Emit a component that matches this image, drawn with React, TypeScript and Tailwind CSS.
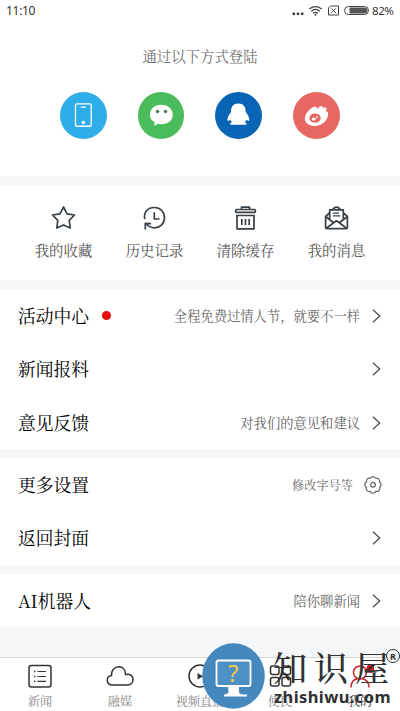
import React from 'react';

const cjk = "font-['Noto_Serif_CJK_SC','Noto_Sans_CJK_SC',serif]";

const Chevron = () => (
  <svg className="w-[22px] h-[18px] shrink-0" viewBox="0 0 22 18" fill="none" stroke="#555" strokeWidth="1.4">
    <path d="M11 2.7L17.7 9L11 15.3" />
  </svg>
);

const Gear = () => (
  <svg className="w-[22px] h-[22px] shrink-0" viewBox="0 0 22 22" fill="none" stroke="#666" strokeWidth="1.2">
    <path d="M8.4 4.2A3 3 0 0 1 13.6 4.2A3 3 0 0 1 17.4 7.9A3 3 0 0 1 17.6 13.2A3 3 0 0 1 13.9 17.3A3 3 0 0 1 8.3 17.4A3 3 0 0 1 4.5 13.4A3 3 0 0 1 4.6 7.9A3 3 0 0 1 8.4 4.2Z" />
    <circle cx="11" cy="10.8" r="2.4" />
  </svg>
);

const StatusBar = () => (
  <div className="h-[22px] pl-[6px] pr-[6px] flex items-center justify-between font-['Noto_Sans',sans-serif] leading-none text-[#333]">
    <span className="text-[12px] tracking-[-0.3px]">11:10</span>
    <div className="flex items-center">
      <svg className="w-[80px] h-[14px]" viewBox="0 0 80 14" fill="none" stroke="#444">
        <g fill="#333" stroke="none">
          <circle cx="1.8" cy="9.8" r="1.4" />
          <circle cx="6" cy="9.8" r="1.4" />
          <circle cx="10.2" cy="9.8" r="1.4" />
        </g>
        <path d="M17.3 5Q23.5 0.3 29.7 5M19.2 7.2Q23.5 3.7 27.8 7.2M21 9.3Q23.5 7.3 26 9.3" strokeWidth="1.2" />
        <circle cx="23.5" cy="10.8" r="1" fill="#444" stroke="none" />
        <path d="M38.5 2H46.5V11H36.5V4ZM39.3 4.3L43.9 8.9M43.9 4.3L39.3 8.9" />
        <rect x="52.5" y="2.5" width="24" height="8" rx="4" />
        <path d="M57.5 3.5H73Q75.5 4 75.5 6.5Q75.5 9 73 9.5H57.5Z" fill="#555" stroke="none" />
      </svg>
      <span className="w-[22px] whitespace-nowrap text-[11.5px] tracking-[-0.4px]">82%</span>
    </div>
  </div>
);

const logins = [
  {
    id: 'phone',
    color: 'bg-[#2fade9]',
    icon: (
      <g fill="none" stroke="white" strokeWidth="1.3">
        <rect x="15.6" y="12" width="15.8" height="22.5" rx="1.2" />
        <path d="M21 15.3H26" />
        <circle cx="23.5" cy="30.8" r="1.1" fill="white" />
      </g>
    ),
  },
  {
    id: 'wechat',
    color: 'bg-[#4bbc5b]',
    icon: (
      <>
        <path d="M23.5 12.8C30 12.8 35 17 35 22.8C35 28.5 30 32.4 23.5 32.4Q21.5 32.4 20 31.9L16.4 34.3L16.8 30.4C13.5 28.3 12 26 12 22.8C12 17 17 12.8 23.5 12.8Z" fill="white" />
        <circle cx="19.6" cy="19.7" r="1.8" fill="#4b8060" />
        <circle cx="27.7" cy="19.7" r="1.8" fill="#4b8060" />
      </>
    ),
  },
  {
    id: 'qq',
    color: 'bg-[#0865b5]',
    icon: (
      <path d="M23.5 11.5C18.6 11.5 15.8 15 16.2 20Q12.8 24.3 12.3 28Q12.7 30.3 15.1 28Q15.8 29.4 17.2 30.4C14.5 31.2 14.4 33 17.2 33H30C32.7 33 32.4 31.2 29.8 30.4Q31.2 29.4 31.9 28Q34.2 30.2 34.7 28Q34.2 24.3 30.8 20C31.2 15 28.4 11.5 23.5 11.5Z" fill="white" />
    ),
  },
  {
    id: 'weibo',
    color: 'bg-[#e96762]',
    icon: (
      <>
        <path d="M12 28C11 22 19.6 13 23.8 15.3Q25 16 24.6 17.4Q27 13.3 29.2 14.2Q30.4 15 29.8 16.5Q32.4 14.5 33.5 16.1Q34.2 17.1 33 19.4Q35.8 19.7 35.4 22.4C35.2 27 31 33.7 22.8 34.2C17.3 34.5 12.7 32 12 28Z" fill="white" />
        <ellipse cx="22.2" cy="26.3" rx="5.7" ry="4.7" fill="#e96762" />
        <ellipse cx="20.9" cy="27.2" rx="2" ry="1.6" fill="white" />
        <circle cx="24.1" cy="25.4" r="0.9" fill="white" />
      </>
    ),
  },
];

const tools = [
  {
    label: '我的收藏',
    icon: <path d="M13.5 3L17 9.8L24.5 11L19.2 16.4L20.2 24L13.5 20.9L6.8 24L7.8 16.4L2.5 11L10 9.8Z" />,
  },
  {
    label: '历史记录',
    icon: <path d="M3.8 15.2C2.3 8 7 3.5 13.3 3.5C19.5 3.5 23.5 8 23.5 13.8C23.5 20 18.8 23.8 13.3 23.8Q9 23.8 5.2 20M4.3 25.4V19.4L10 19.6M13.3 8.2V15H18.6" />,
  },
  {
    label: '清除缓存',
    icon: (
      <>
        <path d="M9.5 5.3V3.2H17.5V5.3M5 11.5V24.8H22V11.5" />
        <rect x="3.6" y="5.5" width="19.8" height="2.8" rx="1" />
        <path d="M4.2 11.5H22.8M9.8 15V21M13.5 15V21M17.2 15V21" />
      </>
    ),
  },
  {
    label: '我的消息',
    icon: (
      <>
        <path d="M6.5 9L2.6 12.5V23.5Q2.6 24.7 3.8 24.7H23.2Q24.4 24.7 24.4 23.5V12.5L20.5 9M9.8 5.3Q13.5 1 17.2 5.3" />
        <path d="M6.7 15.5V5.8H20.3V15.5M2.8 12.8L10.7 18.8L13.5 16.8L16.3 18.8L24.2 12.8M3.3 24.2L10.7 18.8M23.7 24.2L16.3 18.8" />
        <path d="M9.8 9.2H16M9.8 11.8H17.3" strokeWidth="1.2" />
      </>
    ),
  },
];

interface RowProps {
  title: string;
  hint?: string;
  dot?: boolean;
  gear?: boolean;
}

const Row: React.FC<RowProps> = ({ title, hint, dot, gear }) => (
  <div className="h-[53.5px] pl-[18px] pr-4 flex items-center leading-none">
    <span className="text-[17.8px] text-black whitespace-nowrap">{title}</span>
    {dot && <span className="ml-[13px] size-[9px] rounded-full bg-[#e60c0c]" />}
    <span className={`ml-auto whitespace-nowrap text-[#666] ${gear ? 'text-[12.2px] mr-[9px]' : 'text-[13.3px] mr-[2px]'}`}>{hint}</span>
    {gear ? <Gear /> : <Chevron />}
  </div>
);

const tabs = [
  {
    label: '新闻',
    icon: (
      <>
        <rect x="3" y="2.5" width="22" height="21.5" rx="2.5" />
        <path d="M11.5 8.5H20M11.5 13.5H20M11.5 18.3H20" strokeWidth="1.2" />
        <path d="M8 8.5H9.3M8 13.5H9.3M8 18.3H9.3" />
      </>
    ),
  },
  {
    label: '融媒',
    icon: <path d="M6.5 22C-.1 22-.4 13.4 5.5 12.6C5 7.4 8.4 3.8 12.8 3.8C17 3.8 19.6 7 19.6 11.5C24.7 10.2 27 13.6 27 16.6C27 19.8 24.7 22 21.5 22Z" />,
  },
  {
    label: '视频直播',
    icon: (
      <>
        <circle cx="14" cy="13" r="11" />
        <path d="M11.5 10L17 13.2L11.5 16.4Z" fill="#333" stroke="none" />
      </>
    ),
  },
  {
    label: '便民',
    icon: (
      <>
        <rect x="4.5" y="3" width="8.5" height="8.5" rx="2" />
        <rect x="16" y="3" width="8.5" height="8.5" rx="2" />
        <rect x="4.5" y="14.5" width="8.5" height="8.5" rx="2" />
        <rect x="16" y="14.5" width="8.5" height="8.5" rx="2" />
      </>
    ),
  },
  {
    label: '我的',
    active: true,
    icon: (
      <g stroke="#c9202b">
        <circle cx="14" cy="9.5" r="6.5" />
        <path d="M5 24.5Q5 17 11.5 15.8M16.5 15.8Q23 17.5 23 24.5" />
        <circle cx="25" cy="5.5" r="4.5" fill="#db1722" stroke="none" />
      </g>
    ),
  },
];

const Watermark = () => (
  <div className="absolute left-[202px] top-[643px] w-[198px] h-[68px]">
    <svg className="absolute left-0 top-0 w-[63px] h-[66px]" viewBox="0 0 63 66">
      <ellipse cx="31.5" cy="33" rx="31.3" ry="32.7" fill="#4588be" />
      <rect x="14.5" y="17.5" width="34" height="25.5" rx="2" fill="#4c90c5" stroke="white" strokeWidth="1.8" />
      <path d="M26 43.5H37V49Q37 51 41 51.5H45V53.5H22V51.5Q26.5 51 26.5 48.5Z" fill="white" />
    </svg>
    <span className="absolute left-[26px] top-[18px] font-['Noto_Sans',sans-serif] text-[24px] leading-none text-[#f4c747]">?</span>
    <div className={`absolute left-[71px] top-[7px] flex gap-[7px] whitespace-nowrap text-[34px] leading-none font-medium text-[#303233] ${cjk}`}>
      <span>知</span>
      <span>识</span>
      <span>屋</span>
    </div>
    <div className="absolute left-[184px] top-[6px] size-[14px] rounded-full border-[1.5px] border-[#333] flex items-center justify-center font-['Noto_Sans'] text-[9px] leading-none font-bold text-[#333]">R</div>
    <div className="absolute left-[72px] top-[46px] font-['Noto_Sans',sans-serif] text-[16.5px] leading-none font-bold tracking-[0.4px] text-[#303233]">zhishiwu.com</div>
  </div>
);

export default function App() {
  return (
    <div className={`relative w-[400px] h-[711px] overflow-hidden flex flex-col bg-[#f5f6f8] ${cjk}`}>
      <div className="h-[176px] shrink-0 bg-white">
        <StatusBar />
        <p className="mt-[25px] text-center text-[14.4px] leading-[18px] text-[#707070]">通过以下方式登陆</p>
        <div className="mt-[27px] pl-[60px] flex gap-[31px]">
          {logins.map(item => (
            <button key={item.id} className={`size-[46.7px] rounded-full ${item.color}`}>
              <svg className="size-full" viewBox="0 0 47 47">{item.icon}</svg>
            </button>
          ))}
        </div>
      </div>

      <div className="mt-[9px] h-[95px] shrink-0 bg-white px-[18px] pt-[19px] grid grid-cols-4">
        {tools.map(tool => (
          <div key={tool.label} className="flex flex-col items-center">
            <svg className="size-7" viewBox="0 0 28 28" fill="none" stroke="#394148" strokeWidth="1.7" strokeLinejoin="round">{tool.icon}</svg>
            <span className="mt-[9px] text-[14.4px] leading-[18px] text-[#555] whitespace-nowrap">{tool.label}</span>
          </div>
        ))}
      </div>

      <div className="mt-[9px] h-[160px] shrink-0 bg-white">
        <Row title="活动中心" hint="全程免费过情人节，就要不一样" dot />
        <Row title="新闻报料" />
        <Row title="意见反馈" hint="对我们的意见和建议" />
      </div>

      <div className="mt-[9px] h-[107px] shrink-0 bg-white">
        <Row title="更多设置" hint="修改字号等" gear />
        <Row title="返回封面" />
      </div>

      <div className="mt-[9px] h-[53px] shrink-0 bg-white">
        <Row title="AI机器人" hint="陪你聊新闻" />
      </div>

      <nav className="mt-auto h-[54px] shrink-0 bg-white border-t border-[#d4d6d8] grid grid-cols-5 pt-[5px]">
        {tabs.map(tab => (
          <div key={tab.label} className="flex flex-col items-center">
            <svg className="size-7" viewBox="0 0 28 28" fill="none" stroke="#333" strokeWidth="1.5">{tab.icon}</svg>
            <span className={`mt-[2px] text-[12.2px] leading-[16px] whitespace-nowrap ${tab.active ? 'text-[#333]' : 'text-[#858585]'}`}>{tab.label}</span>
          </div>
        ))}
      </nav>
      <Watermark />
    </div>
  );
}
